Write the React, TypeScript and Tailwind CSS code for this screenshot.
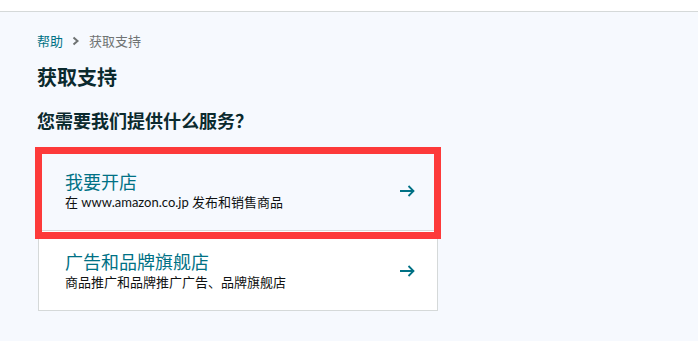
import React from "react";

function Arrow() {
  return (
    <svg width="16" height="12" viewBox="0 0 16 12" fill="none" className="shrink-0">
      <path d="M1 6H14.5" stroke="#007185" strokeWidth="2" />
      <path d="M9.5 1L14.5 6L9.5 11" stroke="#007185" strokeWidth="1.8" />
    </svg>
  );
}

function Chevron() {
  return (
    <svg width="8" height="10" viewBox="0 0 8 10" fill="none">
      <path d="M1.5 1.5L5.5 5L1.5 8.5" stroke="#6f7373" strokeWidth="2" />
    </svg>
  );
}

export default function App() {
  const font = { fontFamily: '"Noto Sans", "Noto Sans CJK SC", sans-serif' };
  const descFont = { fontFamily: 'Lato, "Noto Sans CJK SC", sans-serif' };
  return (
    <div className="w-[698px] h-[341px] bg-[#f6f9fe] overflow-hidden" style={font}>
      <div className="h-[12px] bg-white border-b border-[#d5d9d9] box-border" />
      <div className="pl-[37px] pt-[19px]">
        <div className="flex items-center h-[20px] text-[13px] leading-[20px]">
          <span className="text-[#007185]">帮助</span>
          <span className="ml-[9px] mr-[9px] flex items-center">
            <Chevron />
          </span>
          <span className="text-[#6f7373]">获取支持</span>
        </div>
        <h1 className="mt-[13px] text-[20px] leading-[28px] font-bold text-[#0b2a2e]">获取支持</h1>
        <h2 className="mt-[16px] text-[18px] leading-[26px] font-bold text-[#0b2a2e]">您需要我们提供什么服务？</h2>
        <div className="mt-[16px] ml-[1px] w-[400px] relative">
          <div className="h-[81px] border border-[#d5d9d9] bg-[#f6f9fe] flex items-center justify-between pl-[26px] pr-[22px] box-border">
            <div className="flex flex-col">
              <span className="text-[18px] leading-[22px] text-[#007185]">我要开店</span>
              <span className="text-[13px] leading-[18px] text-[#0f1111]" style={descFont}>在 www.amazon.co.jp 发布和销售商品</span>
            </div>
            <Arrow />
          </div>
          <div className="h-[80px] border border-t-0 border-[#d5d9d9] bg-white flex items-center justify-between pl-[26px] pr-[22px] box-border">
            <div className="flex flex-col">
              <span className="text-[18px] leading-[22px] text-[#007185]">广告和品牌旗舰店</span>
              <span className="text-[13px] leading-[18px] text-[#0f1111]">商品推广和品牌推广广告、品牌旗舰店</span>
            </div>
            <Arrow />
          </div>
          <div className="absolute left-[-3px] top-[-3px] w-[406px] h-[92px] border-[7px] border-[#fd3a3a] box-border pointer-events-none" />
        </div>
      </div>
    </div>
  );
}
